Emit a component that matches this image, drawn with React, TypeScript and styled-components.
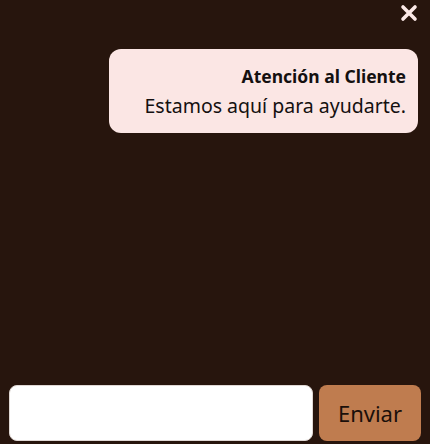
import React, { useState } from 'react';
import styled, { createGlobalStyle } from 'styled-components';

const GlobalStyle = createGlobalStyle`
  html, body {
    margin: 0;
    padding: 0;
    background: #27150d;
  }
  * {
    box-sizing: border-box;
  }
`;

const ChatWindow = styled.div`
  height: 444px;
  width: 430px;
  display: flex;
  flex-direction: column;
  background: #27150d;
  font-family: "Noto Sans", "Open Sans", sans-serif;
`;

const Header = styled.div`
  display: flex;
  justify-content: flex-end;
  padding: 2px 10px 0 0;
  height: 30px;
`;

const CloseButton = styled.button`
  background: none;
  border: none;
  padding: 0;
  width: 22px;
  height: 22px;
  display: flex;
  align-items: center;
  justify-content: center;
  cursor: pointer;
`;

const Messages = styled.div`
  flex: 1;
  display: flex;
  flex-direction: column;
  align-items: flex-end;
  padding: 19px 12px 0 0;
`;

const Bubble = styled.div`
  width: 309px;
  background: #fbe6e4;
  border-radius: 12px;
  padding: 14px 12px 11px 12px;
  text-align: right;
  color: #141010;
`;

const BubbleTitle = styled.div`
  font-weight: 700;
  font-size: 17.5px;
  line-height: 26px;
`;

const BubbleText = styled.div`
  font-size: 19.5px;
  line-height: 33px;
`;

const InputRow = styled.div`
  display: flex;
  gap: 6px;
  padding: 0 9px 3px 9px;
`;

const TextInput = styled.input`
  flex: 1;
  height: 56px;
  border: 1px solid #e0d8d4;
  border-radius: 8px;
  background: #ffffff;
  font-family: inherit;
  font-size: 18px;
  padding: 0 12px;
  outline: none;
`;

const SendButton = styled.button`
  width: 102px;
  height: 56px;
  border: none;
  border-radius: 8px;
  background: #bf7c4f;
  color: #1a0f0a;
  font-family: inherit;
  font-size: 22px;
  cursor: pointer;
`;

export default function App() {
  const [text, setText] = useState('');
  return (
    <>
      <GlobalStyle />
      <ChatWindow>
        <Header>
          <CloseButton aria-label="Cerrar">
            <svg width="18" height="18" viewBox="0 0 18 18">
              <path d="M3 3 L15 15 M15 3 L3 15" stroke="#fbe9e7" strokeWidth="3.6" strokeLinecap="round" />
            </svg>
          </CloseButton>
        </Header>
        <Messages>
          <Bubble>
            <BubbleTitle>Atención al Cliente</BubbleTitle>
            <BubbleText>Estamos aquí para ayudarte.</BubbleText>
          </Bubble>
        </Messages>
        <InputRow>
          <TextInput value={text} onChange={e => setText(e.currentTarget.value)} />
          <SendButton>Enviar</SendButton>
        </InputRow>
      </ChatWindow>
    </>
  );
}
